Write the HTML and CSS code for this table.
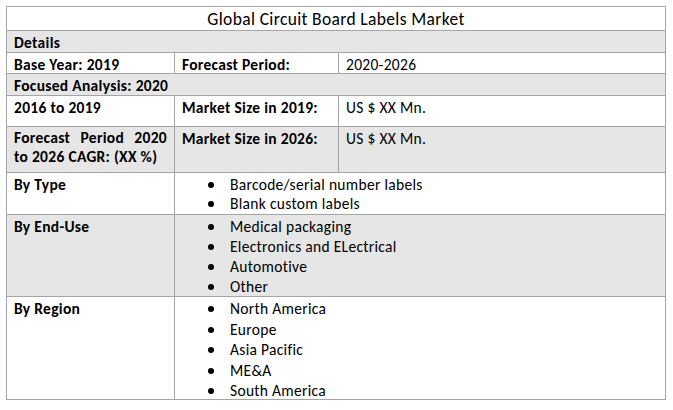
FILE: index.html
```html
<!DOCTYPE html>
<html>
<head>
<meta charset="utf-8">
<link rel="stylesheet" href="styles.css">
</head>
<body>
<div class="page">
  <div class="sheet">
    <div class="cell title span3">Global Circuit Board Labels Market</div>
    <div class="cell gray b span3">Details</div>
    <div class="cell b">Base Year: 2019</div>
    <div class="cell b">Forecast Period:</div>
    <div class="cell">2020-2026</div>
    <div class="cell gray b span3">Focused Analysis: 2020</div>
    <div class="cell b">2016 to 2019</div>
    <div class="cell b">Market Size in 2019:</div>
    <div class="cell">US $ XX Mn.</div>
    <div class="cell gray b just">Forecast Period 2020 to 2026 CAGR: (XX %)</div>
    <div class="cell gray b">Market Size in 2026:</div>
    <div class="cell gray">US $ XX Mn.</div>
    <div class="cell b">By Type</div>
    <div class="cell span2">
      <ul class="list tight">
        <li>Barcode/serial number labels</li>
        <li>Blank custom labels</li>
      </ul>
    </div>
    <div class="cell gray b">By End-Use</div>
    <div class="cell gray span2">
      <ul class="list">
        <li>Medical packaging</li>
        <li>Electronics and ELectrical</li>
        <li>Automotive</li>
        <li>Other</li>
      </ul>
    </div>
    <div class="cell b">By Region</div>
    <div class="cell span2">
      <ul class="list wide">
        <li>North America</li>
        <li>Europe</li>
        <li>Asia Pacific</li>
        <li>ME&amp;A</li>
        <li>South America</li>
      </ul>
    </div>
  </div>
</div>
</body>
</html>
```
FILE: styles.css
```css
html, body {
  margin: 0;
  padding: 0;
  background: #ffffff;
}
.page {
  padding: 6px 0 0 6px;
}
.sheet {
  display: grid;
  grid-template-columns: 167px 163px 326px;
  grid-template-rows: 23px 21px 20px 21px 30px 45px 41px 81px 102px;
  gap: 1px;
  padding: 1px;
  width: 658px;
  background: #a5a5a5;
  font-family: Carlito, Lato, "Liberation Sans", sans-serif;
  font-size: 15.5px;
  letter-spacing: 0.3px;
  color: #000;
}
.cell {
  background: #ffffff;
  padding: 2px 7px 0 7px;
  line-height: 19px;
}
.gray {
  background: #e7e6e6;
}
.b {
  font-weight: bold;
}
.span3 {
  grid-column: span 3;
}
.span2 {
  grid-column: span 2;
}
.title {
  font-size: 17.5px;
  letter-spacing: 0.35px;
  text-align: center;
  line-height: 22px;
  padding-top: 1px;
  border-bottom: 1px solid #a5a5a5;
  height: 22px;
}
.just {
  text-align: justify;
  padding-top: 1px;
}
.list {
  margin: 0;
  padding: 0 0 0 48px;
  list-style: none;
}
.list li {
  position: relative;
  line-height: 20px;
}
.list.tight li {
  line-height: 19px;
}
.list.wide li {
  line-height: 20.5px;
}
.list li::before {
  content: "";
  position: absolute;
  left: -22px;
  top: 7px;
  width: 6px;
  height: 6px;
  border-radius: 50%;
  background: #000;
}
```
